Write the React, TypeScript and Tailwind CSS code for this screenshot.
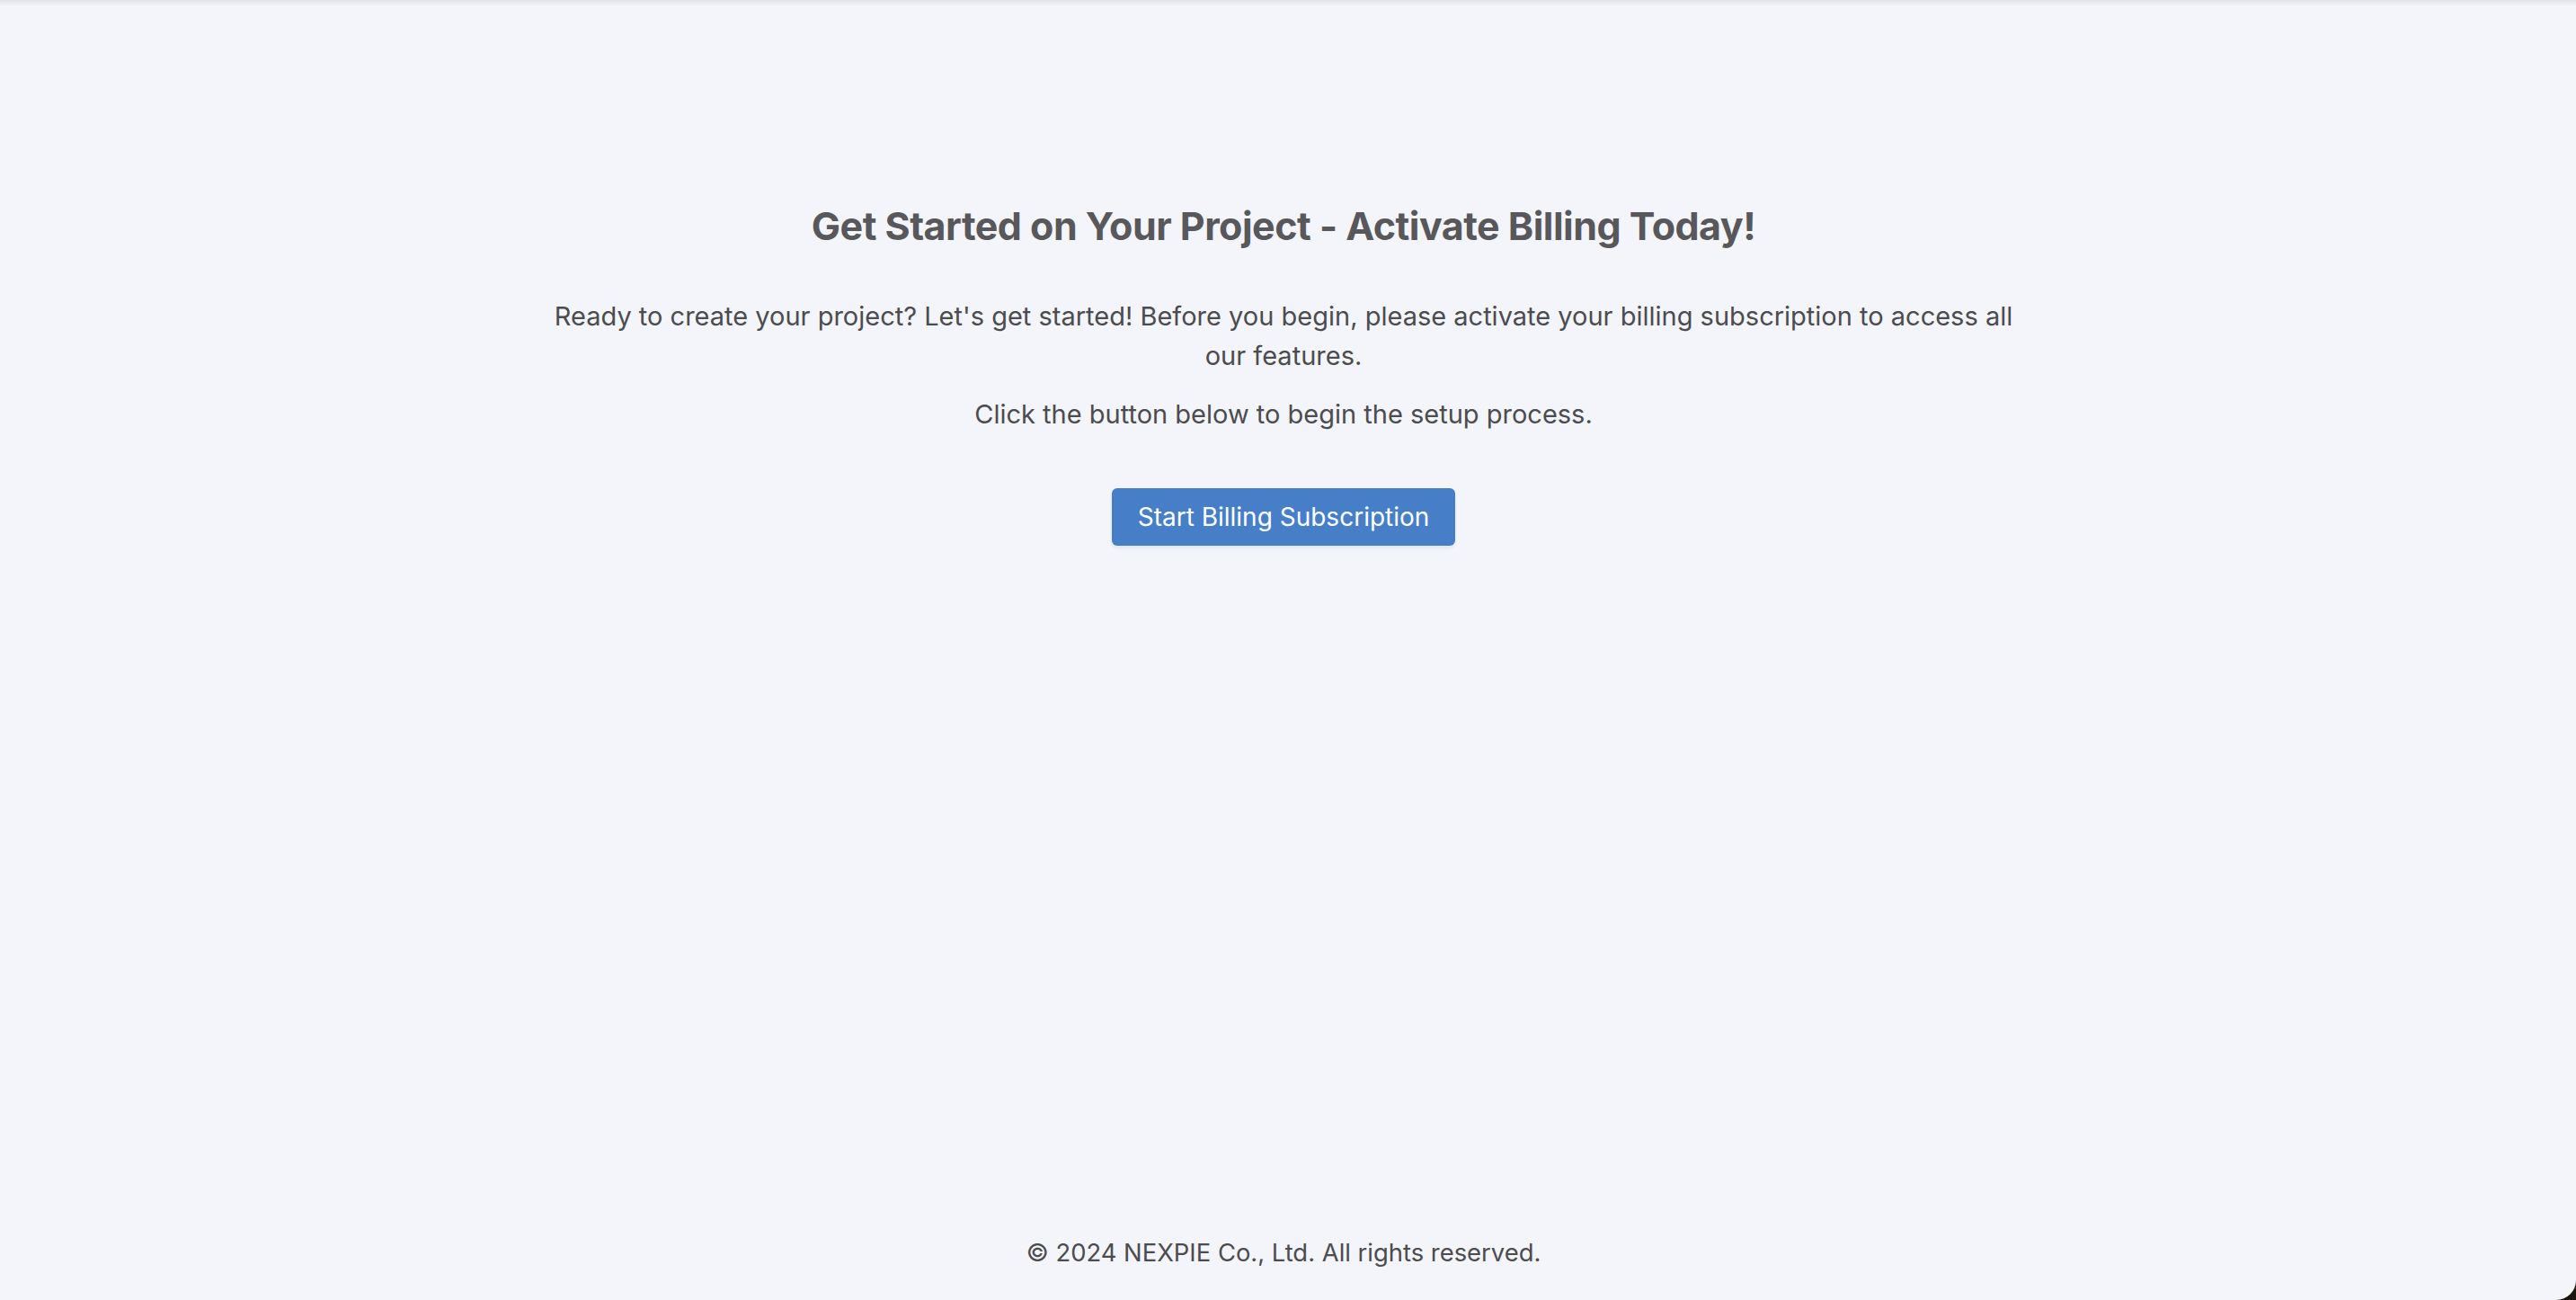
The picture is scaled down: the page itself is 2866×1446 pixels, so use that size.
export default function App() {
  return (
    <div className="h-[1446px] bg-[#1c160c]">
      <div
        className="relative flex h-full flex-col items-center rounded-br-[22px] bg-[#f4f5fa] pr-[10px] text-[#4b4b50]"
        style={{ fontFamily: 'Inter, "Liberation Sans", sans-serif' }}
      >
        {/* top shadow from the app header */}
        <div className="absolute inset-x-0 top-0 h-[7px] bg-gradient-to-b from-[#e2e3e9] to-transparent" />

        <main className="flex w-full flex-1 flex-col items-center pt-[225px] text-center">
          <h1 className="text-[43px] font-bold leading-[53px] tracking-[-0.012em] text-[#58585c]">
            Get Started on Your Project - Activate Billing Today!
          </h1>
          <p className="mt-[52px] max-w-[1660px] text-[29px] leading-[44px]">
            Ready to create your project? Let's get started! Before you begin, please activate your billing subscription to access all our features.
          </p>
          <p className="mt-[21px] text-[29px] leading-[44px]">
            Click the button below to begin the setup process.
          </p>
          <button className="mt-[60px] flex h-[64px] items-center rounded-[6px] bg-[#477ec8] px-[29px] text-[28px] text-white shadow-[0_3px_3px_rgba(0,0,0,0.06)]">
            Start Billing Subscription
          </button>
        </main>

        <footer className="pb-[31px] text-[27.4px] leading-[44px] text-[#4b4b50]">
          © 2024 NEXPIE Co., Ltd. All rights reserved.
        </footer>
      </div>
    </div>
  );
}
